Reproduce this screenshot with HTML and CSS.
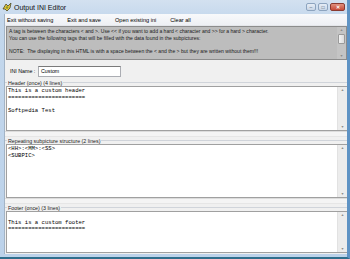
FILE: index.html
```html
<!DOCTYPE html>
<html lang="en">
<head>
    <meta charset="UTF-8">
    <title>Output INI Editor</title>
    <link rel="stylesheet" href="styles.css">
</head>
<body>
    <div class="window">
        <!-- Title bar -->
        <div class="titlebar">
            <svg class="app-icon" width="10" height="10" viewBox="0 0 10 10">
                <path d="M1 7 L4 2 L6 4 L9 1 L8 6 L5 9 L3 7 Z" fill="#e8c63a" stroke="#4a4a2a" stroke-width="0.8"/>
                <circle cx="5" cy="5.5" r="1.3" fill="#8a9a2a"/>
            </svg>
            <span class="title">Output INI Editor</span>
            <div class="win-buttons">
                <div class="win-btn">&#8211;</div>
                <div class="win-btn">&#9633;</div>
                <div class="win-btn close">&#10005;</div>
            </div>
        </div>

        <div class="body">
            <!-- Menu -->
            <div class="menubar">
                <span class="menu-item">Exit without saving</span>
                <span class="menu-item">Exit and save</span>
                <span class="menu-item">Open existing ini</span>
                <span class="menu-item">Clear all</span>
            </div>

            <!-- Info box -->
            <div class="info">
                <div class="info-text">
                    <div>A tag is between the characters &lt; and &gt;. Use &lt;&lt; if you want to add a hard &lt; character and &gt;&gt; for a hard &gt; character.</div>
                    <div>You can use the following tags that will be filled with the data found in the subpictures:</div>
                    <div>&nbsp;</div>
                    <div>NOTE:&nbsp; The displaying in this HTML is with a space between the &lt; and the &gt; but they are written without them!!!</div>
                </div>
                <div class="scrollbar">
                    <span class="arrow">&#9650;</span>
                    <span class="thumb"></span>
                    <span class="arrow">&#9660;</span>
                </div>
            </div>

            <!-- INI name -->
            <div class="name-row">
                <span class="label">INI Name :</span>
                <div class="input-field">Custom</div>
            </div>

            <!-- Header -->
            <div class="legend"><span>Header (once) (4 lines)</span></div>
            <div class="textbox header-box">
                <div class="code">This is a custom header
=======================

Softpedia Test</div>
                <div class="scrollbar">
                    <span class="arrow">&#9650;</span>
                    <span class="arrow">&#9660;</span>
                </div>
            </div>

            <div class="splitter"></div>

            <!-- Repeating -->
            <div class="legend"><span>Repeating subpicture structure (2 lines)</span></div>
            <div class="textbox repeat-box">
                <div class="code">&lt;HH&gt;:&lt;MM&gt;:&lt;SS&gt;
&lt;SUBPIC&gt;</div>
                <div class="scrollbar">
                    <span class="arrow">&#9650;</span>
                    <span class="arrow">&#9660;</span>
                </div>
            </div>

            <div class="splitter"></div>

            <!-- Footer -->
            <div class="legend"><span>Footer (once) (3 lines)</span></div>
            <div class="textbox footer-box">
                <div class="code">
This is a custom footer
=======================</div>
                <div class="scrollbar">
                    <span class="arrow">&#9650;</span>
                    <span class="arrow">&#9660;</span>
                </div>
            </div>
        </div>
    </div>
</body>
</html>
```

FILE: styles.css
```css
body {
    margin: 0;
    padding: 0;
    font-family: 'Liberation Sans', Arial, sans-serif;
    color: #000;
    background-color: #3a7ca5;
}

.window {
    width: 350px;
    height: 259px;
    box-sizing: border-box;
    display: flex;
    flex-direction: column;
    background: linear-gradient(#d3e1f0, #c3d7ec 20px, #bcd2ea);
    border-right: 3px solid #5f93c4;
    border-bottom: 2px solid #2f6e8c;
}

.titlebar {
    height: 14px;
    display: flex;
    align-items: center;
    padding: 0 2px 0 2px;
}

.app-icon {
    margin-right: 2px;
}

.title {
    font-size: 7px;
    color: #111;
}

.win-buttons {
    margin-left: auto;
    display: flex;
    gap: 2px;
    align-self: flex-start;
    margin-top: 3px;
}

.win-btn {
    width: 10px;
    height: 8px;
    box-sizing: border-box;
    border: 1px solid #8da4bf;
    border-radius: 2px;
    background: linear-gradient(#e6edf6, #c9d6e6);
    font-size: 5px;
    line-height: 6px;
    text-align: center;
    color: #4a5a70;
}

.win-btn.close {
    width: 15px;
    border-color: #8a3a30;
    background: linear-gradient(#e0907e, #c74a38);
    color: #fff;
    font-weight: bold;
}

.body {
    flex: 1;
    display: flex;
    flex-direction: column;
    margin: 0 0 3px 4px;
    background-color: #f0f0f0;
    border-left: 1px solid #a3b4c6;
    min-height: 0;
}

.menubar {
    height: 11px;
    display: flex;
    align-items: center;
    gap: 14px;
    padding-left: 2px;
    background: linear-gradient(#f8f9fb, #eef0f4);
    border-bottom: 1px solid #e4e6ea;
    font-size: 5.6px;
}

.info {
    height: 34px;
    box-sizing: border-box;
    margin: 0 0 0 1px;
    display: flex;
    background-color: #bdbdbd;
    border: 1px solid #8c8c8c;
}

.info-text {
    flex: 1;
    padding: 1px 0 0 2px;
    font-size: 5.05px;
    line-height: 6.5px;
    color: #1a1a1a;
    white-space: nowrap;
    overflow: hidden;
}

.scrollbar {
    width: 9px;
    flex-shrink: 0;
    display: flex;
    flex-direction: column;
    align-items: center;
    justify-content: space-between;
    background-color: #ececec;
    border-left: 1px solid #e2e2e2;
}

.info .scrollbar {
    background-color: #c4c4c4;
    border-left: none;
    justify-content: flex-start;
}

.arrow {
    font-size: 3.5px;
    line-height: 6px;
    color: #8a8a8a;
}

.thumb {
    width: 7px;
    height: 10px;
    margin-top: 1px;
    box-sizing: border-box;
    border: 1px solid #9a9a9a;
    border-radius: 1px;
    background: linear-gradient(90deg, #f4f4f4, #dcdcdc);
    flex: none;
}

.info .scrollbar .arrow:last-child {
    margin-top: auto;
}

.name-row {
    height: 19px;
    display: flex;
    align-items: center;
    padding: 3px 0 0 5px;
    box-sizing: border-box;
    font-size: 5.3px;
}

.label {
    width: 28px;
}

.input-field {
    width: 83px;
    height: 11px;
    box-sizing: border-box;
    background: #fff;
    border: 1px solid #abadb3;
    border-top-color: #7a7a7a;
    padding-left: 2px;
    line-height: 9px;
}

.legend {
    height: 7px;
    display: flex;
    align-items: center;
    font-size: 5.3px;
    color: #222;
}

.legend::before {
    content: "";
    width: 2px;
    border-top: 1px solid #d0d4da;
}

.legend::after {
    content: "";
    flex: 1;
    border-top: 1px solid #d0d4da;
}

.legend span {
    padding: 0 1px;
}

.textbox {
    display: flex;
    margin-left: 1px;
    background-color: #fff;
    border: 1px solid #a0a0a0;
    border-right: none;
    box-sizing: border-box;
}

.header-box {
    height: 45px;
}

.repeat-box {
    height: 54px;
}

.footer-box {
    height: 42px;
}

.code {
    flex: 1;
    padding: 1px 0 0 1px;
    font-family: 'Liberation Mono', 'Courier New', monospace;
    font-size: 5.6px;
    line-height: 6.6px;
    white-space: pre;
    overflow: hidden;
}

.splitter {
    height: 6px;
    box-sizing: border-box;
    border-top: 1px solid #dcdcdc;
    border-bottom: 1px solid #e6e6e6;
    background: linear-gradient(#f4f4f4, #f4f4f4 40%, #c9c9c9 40%, #c9c9c9 55%, #f4f4f4 55%);
}
```
